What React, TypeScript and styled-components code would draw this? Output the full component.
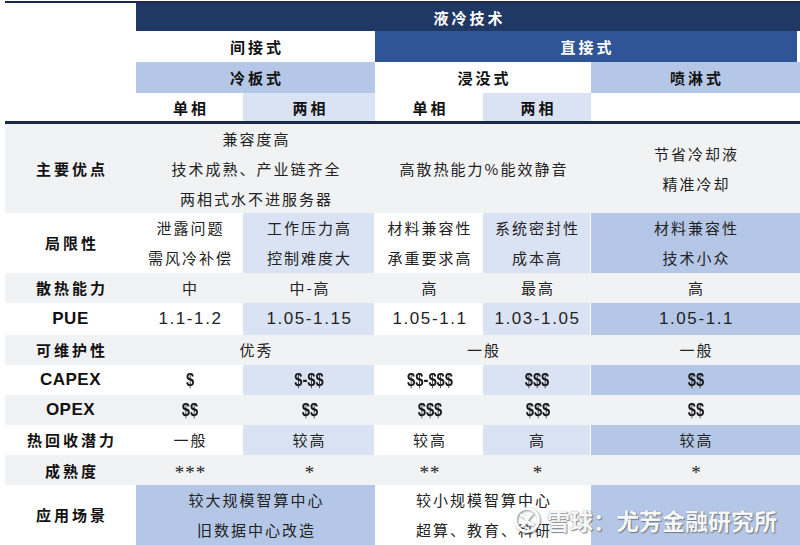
import styled, { createGlobalStyle } from "styled-components";

const GlobalStyle = createGlobalStyle`
  html, body {
    margin: 0;
    padding: 0;
    background: #ffffff;
  }
  body {
    font-family: "Noto Sans CJK SC", "Liberation Sans", sans-serif;
    color: #222;
  }
`;

// column widths: label | cold single | cold two | immersion single | immersion two | spray
const COLS = "131px 107px 132px 108px 108px 209px";

type Tone = "none" | "navy" | "blue" | "mid" | "light";

const toneColor: Record<Tone, string> = {
  none: "transparent",
  navy: "#1f3864",
  blue: "#2f5597",
  mid: "#b4c7e7",
  light: "#dae3f3",
};

const Page = styled.div`
  position: relative;
  width: 800px;
  height: 545px;
  box-sizing: border-box;
  padding: 1px 0 0 5px;
  overflow: hidden;
`;

const Table = styled.div`
  border-top: 2px solid #1b2846;
`;

const Row = styled.div<{ $h: number; $shade?: boolean }>`
  display: grid;
  grid-template-columns: ${COLS};
  height: ${(p) => p.$h}px;
  background: ${(p) => (p.$shade ? "#f1f2f4" : "#ffffff")};
`;

const Rule = styled.div`
  height: 3px;
  background: #1b2846;
`;

const HeadCell = styled.div<{ $span?: number; $tone?: Tone; $trim?: boolean }>`
  grid-column: span ${(p) => p.$span ?? 1};
  display: flex;
  align-items: center;
  justify-content: center;
  margin-right: ${(p) => (p.$trim ? "3px" : "0")};
  background: ${(p) => toneColor[p.$tone ?? "none"]};
  color: ${(p) => (p.$tone === "navy" || p.$tone === "blue" ? "#ffffff" : "#111")};
  font-size: 15px;
  font-weight: 700;
  letter-spacing: 3px;
  padding-left: 3px;
`;

const Label = styled.div<{ $latin?: boolean }>`
  display: flex;
  align-items: center;
  justify-content: center;
  padding-bottom: ${(p) => (p.$latin ? "0" : "2px")};
  font-family: ${(p) =>
    p.$latin ? `"Liberation Sans", "Noto Sans CJK SC", sans-serif` : `"Noto Sans CJK SC", sans-serif`};
  font-size: ${(p) => (p.$latin ? "17px" : "15px")};
  font-weight: 700;
  letter-spacing: ${(p) => (p.$latin ? "0.5px" : "3px")};
  padding-left: ${(p) => (p.$latin ? "0" : "3px")};
  color: #111;
`;

const Cell = styled.div<{ $span?: number; $tone?: Tone }>`
  grid-column: span ${(p) => p.$span ?? 1};
  display: flex;
  flex-direction: column;
  align-items: center;
  justify-content: center;
  background: ${(p) => toneColor[p.$tone ?? "none"]};
  margin-right: ${(p) => (p.$tone === "light" ? "1px" : "0")};
  font-size: 15px;
  letter-spacing: 2px;
  padding-left: 2px;
  line-height: 30px;
  color: #222;
`;

const Num = styled.span`
  font-family: "Liberation Sans", sans-serif;
  font-size: 17px;
  letter-spacing: 1.6px;
`;

const Money = styled.span`
  font-family: "Liberation Sans Narrow", "Liberation Sans", sans-serif;
  font-size: 18px;
  font-weight: 700;
  letter-spacing: 0;
  color: #1a1a1a;
  display: inline-block;
  transform: scaleX(0.82);
`;

const Stars = styled.span`
  font-family: "Liberation Serif", serif;
  font-size: 19px;
  letter-spacing: 1px;
  padding-top: 3px;
`;

const Watermark = styled.div`
  position: absolute;
  left: 513px;
  top: 503px;
  display: flex;
  align-items: center;
  gap: 6px;
  color: rgba(255, 255, 255, 0.95);
  font-family: "Noto Sans CJK SC", sans-serif;
  font-size: 23px;
  font-weight: 700;
  letter-spacing: 0;
  text-shadow: 0 0 1px #7d838e, 1px 1px 1px rgba(80, 85, 95, 0.7);
  pointer-events: none;
`;

const LogoIcon = () => (
  <svg width="28" height="28" viewBox="0 0 28 28" style={{ filter: "drop-shadow(1px 1px 1px rgba(80,85,95,0.7))" }}>
    <circle cx="14" cy="14" r="11.5" fill="none" stroke="#ffffff" strokeWidth="2.6" />
    <path d="M8 9 C12 12, 16 12, 19 8" fill="none" stroke="#ffffff" strokeWidth="2.4" strokeLinecap="round" />
    <path d="M9 20 C12 15, 16 15, 20 19" fill="none" stroke="#ffffff" strokeWidth="2.4" strokeLinecap="round" />
    <path d="M11 10 L17 19 M17 10 L11 19" fill="none" stroke="#ffffff" strokeWidth="2.2" strokeLinecap="round" />
  </svg>
);

type Line = string | string[];

const lines = (v: Line) =>
  (Array.isArray(v) ? v : [v]).map((t, i) => <span key={i}>{t}</span>);

export default function App() {
  return (
    <>
      <GlobalStyle />
      <Page>
        <Table>
          <Row $h={28}>
            <span />
            <HeadCell $span={5} $tone="navy">液冷技术</HeadCell>
          </Row>
          <Row $h={31}>
            <span />
            <HeadCell $span={2}>间接式</HeadCell>
            <HeadCell $span={3} $tone="blue" $trim>直接式</HeadCell>
          </Row>
          <Row $h={31}>
            <span />
            <HeadCell $span={2} $tone="mid">冷板式</HeadCell>
            <HeadCell $span={2}>浸没式</HeadCell>
            <HeadCell $tone="mid">喷淋式</HeadCell>
          </Row>
          <Row $h={28}>
            <span />
            <HeadCell>单相</HeadCell>
            <HeadCell $tone="light">两相</HeadCell>
            <HeadCell>单相</HeadCell>
            <HeadCell $tone="light">两相</HeadCell>
            <span />
          </Row>
          <Rule />

          <Row $h={89} $shade>
            <Label>主要优点</Label>
            <Cell $span={2}>{lines(["兼容度高", "技术成熟、产业链齐全", "两相式水不进服务器"])}</Cell>
            <Cell $span={2}>{lines("高散热能力%能效静音")}</Cell>
            <Cell>{lines(["节省冷却液", "精准冷却"])}</Cell>
          </Row>
          <Row $h={60}>
            <Label>局限性</Label>
            <Cell>{lines(["泄露问题", "需风冷补偿"])}</Cell>
            <Cell $tone="light">{lines(["工作压力高", "控制难度大"])}</Cell>
            <Cell>{lines(["材料兼容性", "承重要求高"])}</Cell>
            <Cell $tone="light">{lines(["系统密封性", "成本高"])}</Cell>
            <Cell $tone="mid">{lines(["材料兼容性", "技术小众"])}</Cell>
          </Row>
          <Row $h={30} $shade>
            <Label>散热能力</Label>
            <Cell>中</Cell>
            <Cell>中-高</Cell>
            <Cell>高</Cell>
            <Cell>最高</Cell>
            <Cell>高</Cell>
          </Row>
          <Row $h={32}>
            <Label $latin>PUE</Label>
            <Cell><Num>1.1-1.2</Num></Cell>
            <Cell $tone="light"><Num>1.05-1.15</Num></Cell>
            <Cell><Num>1.05-1.1</Num></Cell>
            <Cell $tone="light"><Num>1.03-1.05</Num></Cell>
            <Cell $tone="mid"><Num>1.05-1.1</Num></Cell>
          </Row>
          <Row $h={30} $shade>
            <Label>可维护性</Label>
            <Cell $span={2}>优秀</Cell>
            <Cell $span={2}>一般</Cell>
            <Cell>一般</Cell>
          </Row>
          <Row $h={30}>
            <Label $latin>CAPEX</Label>
            <Cell><Money>$</Money></Cell>
            <Cell $tone="light"><Money>$-$$</Money></Cell>
            <Cell><Money>$$-$$$</Money></Cell>
            <Cell $tone="light"><Money>$$$</Money></Cell>
            <Cell $tone="mid"><Money>$$</Money></Cell>
          </Row>
          <Row $h={30} $shade>
            <Label $latin>OPEX</Label>
            <Cell><Money>$$</Money></Cell>
            <Cell><Money>$$</Money></Cell>
            <Cell><Money>$$$</Money></Cell>
            <Cell><Money>$$$</Money></Cell>
            <Cell><Money>$$</Money></Cell>
          </Row>
          <Row $h={30}>
            <Label>热回收潜力</Label>
            <Cell>一般</Cell>
            <Cell $tone="light">较高</Cell>
            <Cell>较高</Cell>
            <Cell $tone="light">高</Cell>
            <Cell $tone="mid">较高</Cell>
          </Row>
          <Row $h={30} $shade>
            <Label>成熟度</Label>
            <Cell><Stars>***</Stars></Cell>
            <Cell><Stars>*</Stars></Cell>
            <Cell><Stars>**</Stars></Cell>
            <Cell><Stars>*</Stars></Cell>
            <Cell><Stars>*</Stars></Cell>
          </Row>
          <Row $h={60}>
            <Label>应用场景</Label>
            <Cell $span={2} $tone="mid">{lines(["较大规模智算中心", "旧数据中心改造"])}</Cell>
            <Cell $span={2}>{lines(["较小规模智算中心", "超算、教育、科研"])}</Cell>
            <Cell $tone="mid" />
          </Row>
        </Table>
        <Watermark>
          <LogoIcon />
          <span>雪球：尤芳金融研究所</span>
        </Watermark>
      </Page>
    </>
  );
}
